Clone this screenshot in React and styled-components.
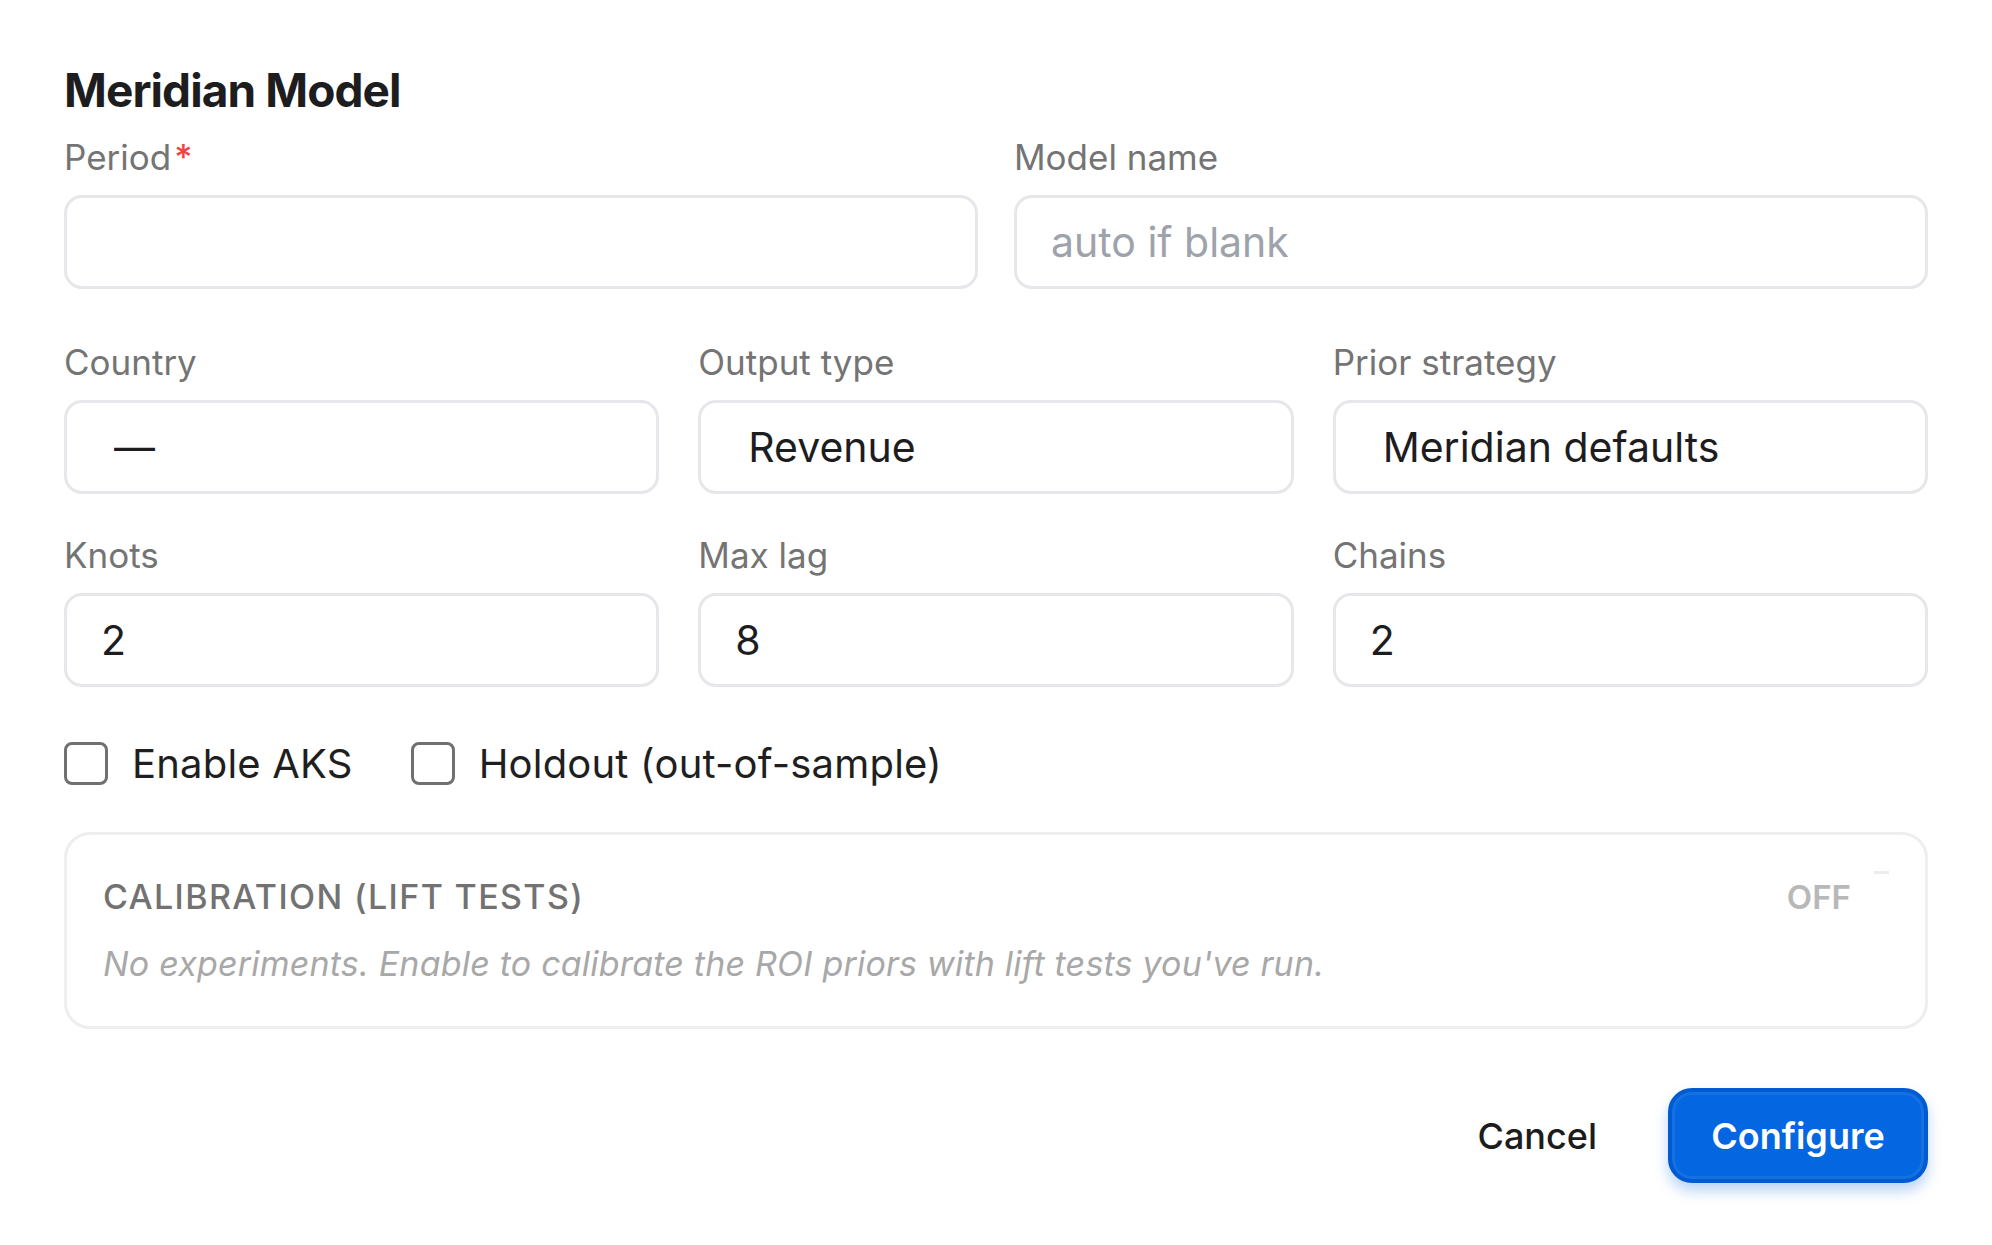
import React, { useState } from "react";
import styled, { createGlobalStyle } from "styled-components";

const GlobalStyle = createGlobalStyle`
  html, body {
    margin: 0;
    padding: 0;
    background: #ffffff;
  }
  * {
    box-sizing: border-box;
  }
  body {
    font-family: "Inter", "Noto Sans", "Liberation Sans", sans-serif;
    color: #1d1d1f;
  }
`;

const COUNTRY_OPTIONS = ["—", "United States", "United Kingdom", "Germany"];
const OUTPUT_OPTIONS = ["Revenue", "Conversions"];
const PRIOR_OPTIONS = ["Meridian defaults", "Custom"];

const App = () => {
  const [aks, setAks] = useState(false);
  const [holdout, setHoldout] = useState(false);

  return (
    <Page>
      <GlobalStyle />
      <Title>Meridian Model</Title>

      <Grid cols={2} gap={36}>
        <Field>
          <Label>
            Period<Required>*</Required>
          </Label>
          <Input type="text" />
        </Field>
        <Field>
          <Label>Model name</Label>
          <Input type="text" placeholder="auto if blank" />
        </Field>
      </Grid>

      <Grid cols={3} gap={39} top={53}>
        <Field>
          <Label>Country</Label>
          <Select defaultValue="—">
            {COUNTRY_OPTIONS.map((o) => (
              <option key={o}>{o}</option>
            ))}
          </Select>
        </Field>
        <Field>
          <Label>Output type</Label>
          <Select defaultValue="Revenue">
            {OUTPUT_OPTIONS.map((o) => (
              <option key={o}>{o}</option>
            ))}
          </Select>
        </Field>
        <Field>
          <Label>Prior strategy</Label>
          <Select defaultValue="Meridian defaults">
            {PRIOR_OPTIONS.map((o) => (
              <option key={o}>{o}</option>
            ))}
          </Select>
        </Field>
      </Grid>

      <Grid cols={3} gap={39} top={41}>
        <Field>
          <Label>Knots</Label>
          <Input type="text" defaultValue="2" />
        </Field>
        <Field>
          <Label>Max lag</Label>
          <Input type="text" defaultValue="8" />
        </Field>
        <Field>
          <Label>Chains</Label>
          <Input type="text" defaultValue="2" />
        </Field>
      </Grid>

      <CheckRow>
        <CheckItem>
          <CheckBox type="checkbox" checked={aks} onChange={() => setAks(!aks)} />
          <CheckText>Enable AKS</CheckText>
        </CheckItem>
        <CheckItem>
          <CheckBox
            type="checkbox"
            checked={holdout}
            onChange={() => setHoldout(!holdout)}
          />
          <CheckText>Holdout (out-of-sample)</CheckText>
        </CheckItem>
      </CheckRow>

      <CalCard>
        <CalHandle />
        <CalHeader>
          <CalTitle>Calibration (lift tests)</CalTitle>
          <CalState>OFF</CalState>
        </CalHeader>
        <CalText>
          No experiments. Enable to calibrate the ROI priors with lift tests
          you've run.
        </CalText>
      </CalCard>

      <Actions>
        <GhostButton type="button">Cancel</GhostButton>
        <PrimaryButton type="button">Configure</PrimaryButton>
      </Actions>
    </Page>
  );
};

const Page = styled.div`
  display: flex;
  flex-direction: column;
  width: 100%;
  min-height: 100vh;
  padding: 62px 64px 40px;
  background: #ffffff;
`;

const Title = styled.h1`
  margin: 0;
  font-family: "Inter", sans-serif;
  font-size: 46px;
  line-height: 56px;
  font-weight: 700;
  letter-spacing: -0.02em;
  color: #1d1d1f;
`;

const Grid = styled.div`
  display: grid;
  grid-template-columns: repeat(${(p) => p.cols}, 1fr);
  column-gap: ${(p) => p.gap}px;
  margin-top: ${(p) => p.top || 19}px;
`;

const Field = styled.div`
  display: flex;
  flex-direction: column;
  min-width: 0;
`;

const Label = styled.label`
  display: flex;
  align-items: flex-start;
  font-family: "Inter", sans-serif;
  font-size: 35px;
  line-height: 40px;
  font-weight: 400;
  color: #747474;
  margin-bottom: 18px;
`;

const Required = styled.span`
  color: #ef4444;
  margin-left: 3px;
  font-weight: 500;
`;

const fieldBase = `
  width: 100%;
  height: 94px;
  border: 3px solid #e6e7eb;
  border-radius: 18px;
  background: #ffffff;
  font-family: "Inter", sans-serif;
  font-size: 41px;
  font-weight: 400;
  color: #1d1d1f;
  outline: none;
  margin: 0;
`;

const Input = styled.input`
  ${fieldBase}
  padding: 0 34px;

  &::placeholder {
    color: #9ea3ab;
  }
`;

const Select = styled.select`
  ${fieldBase}
  appearance: none;
  -webkit-appearance: none;
  padding: 0 34px 0 47px;
`;

const CheckRow = styled.div`
  display: flex;
  align-items: center;
  gap: 58px;
  margin-top: 55px;
`;

const CheckItem = styled.label`
  display: flex;
  align-items: center;
  gap: 24px;
  cursor: pointer;
`;

const CheckBox = styled.input`
  appearance: none;
  -webkit-appearance: none;
  width: 44px;
  height: 43px;
  margin: 0;
  border: 3px solid #707070;
  border-radius: 8px;
  background: #ffffff;
  cursor: pointer;

  &:checked {
    background: #0466e0;
    border-color: #0466e0;
  }
`;

const CheckText = styled.span`
  font-family: "Inter", sans-serif;
  font-size: 40px;
  line-height: 43px;
  letter-spacing: 0.2px;
  color: #1f1f1f;
`;

const CalCard = styled.section`
  position: relative;
  display: flex;
  flex-direction: column;
  gap: 23px;
  margin-top: 47px;
  padding: 40px 74px 40px 36px;
  border: 3px solid #eeeeef;
  border-radius: 26px;
`;

const CalHandle = styled.span`
  position: absolute;
  top: 36px;
  right: 36px;
  width: 15px;
  height: 3px;
  background: #ececec;
`;

const CalHeader = styled.div`
  display: flex;
  align-items: center;
  justify-content: space-between;
`;

const CalTitle = styled.h3`
  margin: 0;
  font-family: "Inter", sans-serif;
  font-size: 34px;
  line-height: 44px;
  font-weight: 500;
  letter-spacing: 0.04em;
  text-transform: uppercase;
  color: #727272;
`;

const CalState = styled.span`
  font-family: "Inter", sans-serif;
  font-size: 33px;
  line-height: 44px;
  font-weight: 600;
  color: #b8b8b8;
`;

const CalText = styled.p`
  margin: 0;
  font-family: "Inter", sans-serif;
  font-size: 34px;
  line-height: 44px;
  font-style: italic;
  letter-spacing: 0.2px;
  color: #a8a8a8;
`;

const Actions = styled.div`
  display: flex;
  justify-content: flex-end;
  align-items: center;
  gap: 35px;
  margin-top: 59px;
`;

const GhostButton = styled.button`
  height: 95px;
  padding: 0 36px;
  border: none;
  border-radius: 22px;
  background: transparent;
  font-family: "Inter", sans-serif;
  font-size: 36px;
  font-weight: 500;
  color: #1c1c1c;
  cursor: pointer;
`;

const PrimaryButton = styled.button`
  width: 260px;
  height: 95px;
  border: 4px solid #005ad2;
  border-radius: 24px;
  background: #0466e0;
  box-shadow: inset 0 0 0 3px rgba(255, 255, 255, 0.07),
    0 8px 14px rgba(4, 102, 224, 0.28);
  font-family: "Inter", sans-serif;
  font-size: 36px;
  font-weight: 600;
  color: #ffffff;
  cursor: pointer;
`;

export default App;
